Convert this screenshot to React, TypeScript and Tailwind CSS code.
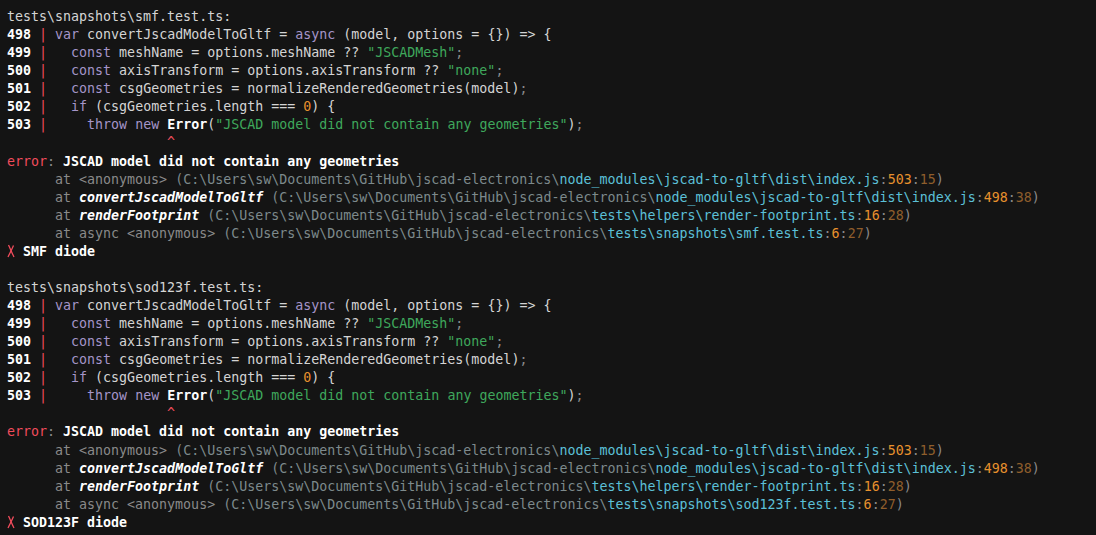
import React from "react";

type Seg = [string, string?];

const K = "text-[#a595c9]";
const S = "text-[#3fa85c]";
const N = "text-[#e8912d]";
const B = "font-bold text-white";
const R = "text-[#f14c5c]";
const G = "text-[#8a8a8a]";
const D = "text-[#7d8a8c]";
const C = "text-[#5cc0d8]";
const O = "text-[#e8912d]";
const BR = "text-[#8f5e2c]";
const BI = "font-bold italic text-white";
const X = "cross";

const codeBlock = (file: string): Seg[][] => [
  [[file]],
  [["498", B], [" | ", R], ["var", K], [" convertJscadModelToGltf = "], ["async", K], [" (model, options = {}) => {"]],
  [["499", B], [" | ", R], ["  "], ["const", K], [" meshName = options.meshName ?? "], ['"JSCADMesh"', S], [";", G]],
  [["500", B], [" | ", R], ["  "], ["const", K], [" axisTransform = options.axisTransform ?? "], ['"none"', S], [";", G]],
  [["501", B], [" | ", R], ["  "], ["const", K], [" csgGeometries = normalizeRenderedGeometries(model)"], [";", G]],
  [["502", B], [" | ", R], ["  "], ["if", K], [" (csgGeometries.length === "], ["0", N], [") {"]],
  [["503", B], [" | ", R], ["    "], ["throw new", K], [" "], ["Error", B], ["("], ['"JSCAD model did not contain any geometries"', S], [")"], [";", G]],
  [["                    "], ["^", R]],
  [["error", R], [": ", G], ["JSCAD model did not contain any geometries", B]],
];

const base = "(C:\\Users\\sw\\Documents\\GitHub\\jscad-electronics\\";

const stack = (testFile: string, name: string): Seg[][] => [
  [["      at <anonymous> ", G], [base, D], ["node_modules\\jscad-to-gltf\\dist\\index.js", C], [":", G], ["503", O], [":", G], ["15", BR], [")", G]],
  [["      at ", G], ["convertJscadModelToGltf", BI], [" " + base, D], ["node_modules\\jscad-to-gltf\\dist\\index.js", C], [":", G], ["498", O], [":", G], ["38", BR], [")", G]],
  [["      at ", G], ["renderFootprint", BI], [" " + base, D], ["tests\\helpers\\render-footprint.ts", C], [":", G], ["16", O], [":", G], ["28", BR], [")", G]],
  [["      at async <anonymous> ", G], [base, D], ["tests\\snapshots\\" + testFile, C], [":", G], ["6", O], [":", G], ["27", BR], [")", G]],
  [["✗", X], [" "], [name, B]],
];

const lines: Seg[][] = [
  ...codeBlock("tests\\snapshots\\smf.test.ts:"),
  ...stack("smf.test.ts", "SMF diode"),
  [[" "]],
  ...codeBlock("tests\\snapshots\\sod123f.test.ts:"),
  ...stack("sod123f.test.ts", "SOD123F diode"),
];

// thin tall red cross like the terminal's ✗ glyph
const Cross = () => (
  <span className="inline-flex w-[8px] justify-center align-[-2px]">
    <svg width="8" height="14" viewBox="0 0 8 14" aria-label="✗">
      <path d="M1.5 1 C3 4, 5 9, 7 13" stroke="#f14c5c" strokeWidth="1.3" fill="none" />
      <path d="M6.5 1.5 C5 5, 3 9, 1 13" stroke="#f14c5c" strokeWidth="1.3" fill="none" />
    </svg>
  </span>
);

export default function App() {
  return (
    <div
      className="w-[1096px] h-[535px] overflow-hidden bg-[#141414] text-[#d4d4d4] pl-[7px] pt-[8px] text-[13.3px] leading-[18.07px] whitespace-pre"
      style={{ fontFamily: '"DejaVu Sans Mono", "Liberation Mono", monospace' }}
    >
      {lines.map((line, i) => (
        <div key={i} className="h-[18.07px]">
          {line.map(([text, cls], j) =>
            cls === X ? (
              <Cross key={j} />
            ) : (
              <span key={j} className={cls}>
                {text}
              </span>
            )
          )}
        </div>
      ))}
    </div>
  );
}
